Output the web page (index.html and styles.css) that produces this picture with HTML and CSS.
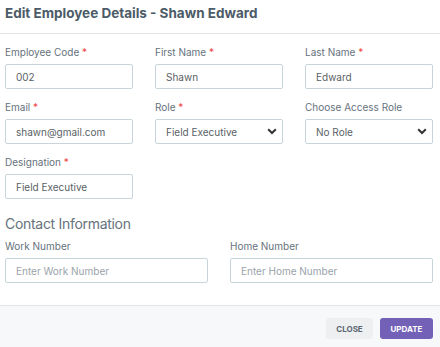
FILE: index.html
```html
<!DOCTYPE html>
<html lang="en">
<head>
    <meta charset="UTF-8">
    <meta name="viewport" content="width=device-width, initial-scale=1.0">
    <title>Edit Employee</title>
    <link rel="stylesheet" href="styles.css">
</head>
<body>
    <div class="modal">
        <div class="modal-header">
            <h1>Edit Employee Details - Shawn Edward</h1>
        </div>
        <form class="modal-body">
            <div class="grid-3">
                <div class="field">
                    <label>Employee Code <span class="req">*</span></label>
                    <input type="text" value="002">
                </div>
                <div class="field">
                    <label>First Name <span class="req">*</span></label>
                    <input type="text" value="Shawn">
                </div>
                <div class="field">
                    <label>Last Name <span class="req">*</span></label>
                    <input type="text" value="Edward">
                </div>
                <div class="field">
                    <label>Email <span class="req">*</span></label>
                    <input type="text" value="shawn@gmail.com">
                </div>
                <div class="field">
                    <label>Role <span class="req">*</span></label>
                    <div class="select-wrap">
                        <select>
                            <option>Field Executive</option>
                        </select>
                        <svg class="chevron" width="10" height="7" viewBox="0 0 10 7"><path d="M1.2 1.2l3.8 3.8 3.8-3.8" fill="none" stroke="#333" stroke-width="2"/></svg>
                    </div>
                </div>
                <div class="field">
                    <label>Choose Access Role</label>
                    <div class="select-wrap">
                        <select>
                            <option>No Role</option>
                        </select>
                        <svg class="chevron" width="10" height="7" viewBox="0 0 10 7"><path d="M1.2 1.2l3.8 3.8 3.8-3.8" fill="none" stroke="#333" stroke-width="2"/></svg>
                    </div>
                </div>
                <div class="field">
                    <label>Designation <span class="req">*</span></label>
                    <input type="text" value="Field Executive">
                </div>
            </div>

            <h2>Contact Information</h2>
            <div class="grid-2">
                <div class="field">
                    <label>Work Number</label>
                    <input type="text" placeholder="Enter Work Number">
                </div>
                <div class="field">
                    <label>Home Number</label>
                    <input type="text" placeholder="Enter Home Number">
                </div>
            </div>
        </form>
        <div class="modal-footer">
            <button class="btn btn-close">Close</button>
            <button class="btn btn-update">Update</button>
        </div>
    </div>
</body>
</html>
```

FILE: styles.css
```css
body {
    margin: 0;
    font-family: 'Inter', 'Roboto', sans-serif;
    background-color: #ffffff;
    color: #4b5b68;
}
.modal {
    width: 440px;
    height: 347px;
    display: flex;
    flex-direction: column;
}
.modal-header {
    height: 34px;
    border-bottom: 1px solid #e3e6e9;
    padding: 0 5px;
    box-sizing: border-box;
}
.modal-header h1 {
    margin: 0;
    font-size: 13.5px;
    font-weight: 700;
    line-height: 27px;
    color: #4b5b68;
}
.modal-body {
    padding: 11px 7px 22px 5px;
}
.grid-3 {
    display: grid;
    grid-template-columns: 128px 128px 128px;
    column-gap: 22px;
    row-gap: 11px;
}
.grid-2 {
    display: grid;
    grid-template-columns: 203px 203px;
    column-gap: 22px;
}
.field label {
    display: block;
    font-size: 10px;
    line-height: 14px;
    color: #66727c;
    margin-bottom: 5px;
}
.req {
    color: #ef4444;
}
.field input,
.field select {
    display: block;
    width: 100%;
    height: 25px;
    box-sizing: border-box;
    border: 1px solid #c7d5db;
    border-radius: 2px;
    padding: 0 10px;
    font-family: inherit;
    font-size: 10px;
    color: #5a5f65;
    background-color: #fff;
    outline: none;
}
.field input::placeholder {
    color: #9aa3aa;
}
.select-wrap {
    position: relative;
}
.field select {
    appearance: none;
    -webkit-appearance: none;
}
.chevron {
    position: absolute;
    right: 6px;
    top: 9px;
    pointer-events: none;
}
h2 {
    margin: 15px 0 5px 0;
    font-size: 14px;
    font-weight: 400;
    letter-spacing: -0.3px;
    line-height: 20px;
    color: #66727c;
}
.modal-footer {
    flex: 1;
    background-color: #f7f8fa;
    border-top: 1px solid #e3e6e9;
    display: flex;
    justify-content: flex-end;
    align-items: flex-start;
    gap: 7px;
    padding: 12px 7px 0 0;
}
.btn {
    height: 21px;
    border: none;
    border-radius: 3px;
    font-family: inherit;
    font-size: 8px;
    font-weight: 700;
    text-transform: uppercase;
    cursor: pointer;
}
.btn-close {
    width: 47px;
    background-color: #eeeff1;
    color: #5a6670;
}
.btn-update {
    width: 53px;
    background-color: #7361b8;
    color: #ffffff;
}
```
